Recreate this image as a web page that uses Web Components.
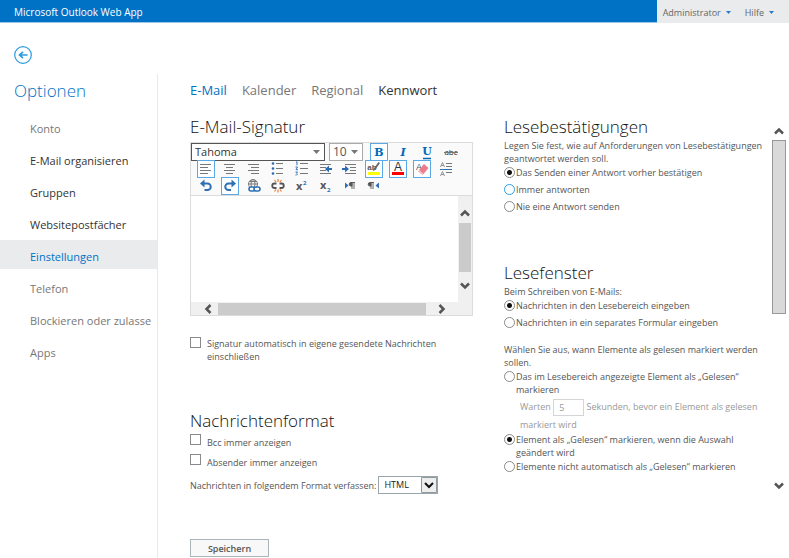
<!DOCTYPE html>
<html lang="de">
<head>
<meta charset="utf-8">
<title>Microsoft Outlook Web App</title>
<style>
body { margin: 0; font: 9px/13px "Open Sans", "Noto Sans", sans-serif; color: #555; background: #fff; }
</style>
</head>
<body>
<owa-app></owa-app>
<script>
const define = (name, html, setup) => {
  const template = document.createElement('template');
  template.innerHTML = html;
  customElements.define(name, class extends HTMLElement {
    constructor() {
      super();
      this.attachShadow({ mode: 'open' }).append(template.content.cloneNode(true));
    }
    connectedCallback() { if (setup) setup(this, this.shadowRoot); }
  });
};

/* Blue title bar with the account menu */
define('owa-topbar', `
<style>
  :host { display: flex; height: 23px; font-size: 10px; }
  .brand { flex: 1; height: 23px; background: #0072c6; color: #fff; padding-left: 14px; line-height: 24px; white-space: nowrap; border-bottom: 1px solid #9fc6e6; box-sizing: border-box; }
  nav { display: flex; gap: 14px; background: #e9ebed; padding: 0 15px 0 6px; }
  button { all: unset; display: flex; align-items: center; gap: 5px; color: #666; font-size: 9px; padding-top: 2px; }
  svg { display: block; }
</style>
<div class="brand">Microsoft Outlook Web App</div>
<nav>
  <button>Administrator <svg width="5" height="3"><path d="M0 0h5L2.5 3z" fill="#2a7ac6"/></svg></button>
  <button>Hilfe <svg width="5" height="3"><path d="M0 0h5L2.5 3z" fill="#2a7ac6"/></svg></button>
</nav>`);

define('owa-nav-item', `
<style>
  :host { display: block; }
  a { display: block; height: 29px; padding: 0 0 0 30px; font-size: 11px; line-height: 34px; color: #777; text-decoration: none; white-space: nowrap; overflow: hidden; }
  :host([strong]) a { color: #333; }
  :host([active]) a { color: #0072c6; background: #e9ebed; }
</style>
<a href="#"><slot></slot></a>`, (host, root) => {
  if (host.hasAttribute('active')) root.querySelector('a').setAttribute('aria-current', 'page');
});

define('owa-sidebar', `
<style>
  :host { display: flex; flex-direction: column; gap: 3px; border-right: 1px solid #e9e9ec; box-sizing: border-box; }
  h1 { margin: 0 0 1px; padding-left: 14px; font-size: 17px; line-height: 34px; font-weight: 300; color: #0072c6; }
</style>
<h1>Optionen</h1>
<slot></slot>`);

define('owa-tabs', `
<style>
  :host { display: flex; gap: 15px; font-size: 13px; line-height: 18px; }
  a { color: #777; text-decoration: none; }
  .on { color: #0072c6; }
  .dark { color: #333; }
</style>
<a href="#" class="on" aria-current="page">E-Mail</a><a href="#">Kalender</a><a href="#">Regional</a><a href="#" class="dark">Kennwort</a>`);

define('owa-section', `
<style>
  :host { display: block; }
  h2 { margin: 0 0 var(--heading-gap, 0); font-size: 17px; line-height: 24px; font-weight: 300; color: #111; }
</style>
<h2></h2><slot></slot>`, (host, root) => { root.querySelector('h2').textContent = host.getAttribute('heading'); });

/* Tick box or radio with its label */
define('owa-choice', `
<style>
  :host { display: block; }
  label { display: flex; align-items: flex-start; }
  input { appearance: none; flex: none; box-sizing: border-box; width: 11px; height: 11px; margin: 0; border: 1px solid #8a8a8a; background: #fff; }
  input[type=radio] { border-radius: 50%; margin: 1px 1px 0 0; }
  input[type=radio]:checked { background: radial-gradient(circle, #111 0 2px, #fff 3px); }
  input[type=checkbox] { margin-right: 6px; }
  :host([hot]) input { border-color: #2a9fe0; }
  :host([kind=checkbox]) span { padding-top: var(--drop, 0); }
</style>
<label><input><span><slot></slot></span></label>`, (host, root) => {
  const input = root.querySelector('input');
  input.type = host.getAttribute('kind') || 'radio';
  input.name = host.getAttribute('group') || '';
  input.checked = host.hasAttribute('checked');
});

/* Toolbar button: its glyph is looked up by name */
const G = '#777', B = '#2b6cb0';
const lines = (x, ws, ys, c = G) => ws.map((w, i) => `<path d="M${x[i]} ${ys[i]}.5h${w}" stroke="${c}"/>`).join('');
const serif = 'text-anchor="middle" font-family="DejaVu Serif" font-weight="700" font-size="11" fill="#0068b8"';
const glyphs = {
  bold: `<text x="9" y="13" ${serif}>B</text>`,
  italic: `<text x="9" y="13" font-style="italic" ${serif}>I</text>`,
  underline: `<text x="9" y="12" ${serif}>U</text><path d="M5 15.500h8" stroke="#0068b8" stroke-width="1.500"/>`,
  strike: '<text x="9" y="12" text-anchor="middle" font-family="Open Sans" font-size="8" fill="#222">abc</text><path d="M2 9.500h14" stroke="#777"/>',
  left: lines([3,3,3,3], [11,8,11,8], [4,7,10,13]),
  center: lines([3,5,3,5], [11,7,11,7], [4,7,10,13]),
  right: lines([3,6,3,6], [11,8,11,8], [4,7,10,13]),
  bullets: lines([7,7,7], [7,7,7], [3,8,13]) + `<g fill="${B}"><circle cx="4" cy="3.500" r="1.300"/><circle cx="4" cy="8.500" r="1.300"/><circle cx="4" cy="13.500" r="1.300"/></g>`,
  numbers: lines([7,7,7], [8,8,8], [3,8,13]) + `<path d="M3 2.500l1-.8v3.600M2.500 7h2L3 9.700h2M2.500 12h2l-1 1.300 1 .8-1 1h-1" fill="none" stroke="${B}" stroke-width=".9"/>`,
  outdent: lines([3,3,3,3], [11,6,6,11], [4,7,10,13]) + `<path d="M8 9l4-3.500v2.500h3v2h-3v2.500z" fill="${B}"/>`,
  indent: lines([4,9,9,4], [11,6,6,11], [4,7,10,13]) + `<path d="M8 9L4 5.500v2.500H1v2h3v2.500z" fill="${B}"/>`,
  highlight: '<text x="7" y="10" text-anchor="middle" font-family="Liberation Sans" font-weight="700" font-size="8" fill="#555">ab</text><path d="M15 3l-5 7-2 1 .5-2 5-7z" fill="#666"/><path d="M3 12h12v3H3z" fill="#ff0"/>',
  color: '<text x="9" y="11" text-anchor="middle" font-family="Liberation Sans" font-size="12" fill="#333">A</text><path d="M3 12h12v3H3z" fill="#f00"/>',
  eraser: '<text x="6" y="10" text-anchor="middle" font-family="Liberation Sans" font-size="9" fill="#555">A</text><path d="M11 4l4.500 4-5 6L6 10z" fill="#ea7d8c"/><path d="M6 10l4.500 4-1.200 1L5 11.500z" fill="#f4b4bc"/>',
  spacing: lines([9,9,3,9], [6,6,12,6], [3,6,9,12]) + '<path d="M3.500 7l2-4.500 2 4.500M4.300 5.500h2.400M3.500 16l2-4.500 2 4.500M4.300 14.500h2.400" fill="none" stroke="#888" stroke-width=".9"/><path d="M3 9.500h12" stroke="#2f6fb3"/>',
  undo: '<path d="M5 6.500h5.500a3.200 3.200 0 0 1 0 6.500H7.500" fill="none" stroke="#2f6fb3" stroke-width="2"/><path d="M7.500 2.500v8L3 6.500z" fill="#2f6fb3"/>',
  redo: '<path d="M13 6.500H7.500a3.200 3.200 0 0 0 0 6.500H10" fill="none" stroke="#2f6fb3" stroke-width="2"/><path d="M10.500 2.500v8L15 6.500z" fill="#2f6fb3"/>',
  link: '<g fill="none" stroke="#777"><circle cx="8" cy="7" r="4.500"/><ellipse cx="8" cy="7" rx="2" ry="4.500"/><path d="M3.500 7h9M4.500 4.500h7"/></g><g fill="#fff" stroke="#2f6fb3" stroke-width="1.600"><rect x="4" y="10" width="6" height="4" rx="2"/><rect x="9" y="10" width="6" height="4" rx="2"/></g>',
  unlink: '<g fill="none" stroke="#555" stroke-width="1.800"><path d="M7.500 6.500H5.500a2.200 2.200 0 0 0 0 4.500h2M10.500 6.500h2a2.200 2.200 0 0 1 0 4.500h-2"/></g><path d="M9 2v3M5.500 3l1.500 2M12.500 3L11 5M9 12.500v3M5.500 14.500L7 12.500M12.500 14.500L11 12.500" stroke="#ee7d31" stroke-width="1.200"/>',
  sup: '<text x="3" y="13" font-family="Open Sans" font-weight="700" font-size="11" fill="#555">x</text><text x="10" y="8" font-family="Open Sans" font-weight="700" font-size="6" fill="#2f6fb3">2</text>',
  sub: '<text x="3" y="12" font-family="Open Sans" font-weight="700" font-size="11" fill="#555">x</text><text x="10" y="15" font-family="Open Sans" font-weight="700" font-size="6" fill="#2f6fb3">2</text>',
  ltr: '<path d="M4 5.500v6L7.500 8.500z" fill="#2f6fb3"/><path d="M11 5.500h-1a1.800 1.800 0 0 0 0 3.600h1zM11 5v7M13 5v7M10 5.500h4" fill="#555" stroke="#555" stroke-width=".9"/>',
  rtl: '<path d="M14 5.500v6L10.500 8.500z" fill="#2f6fb3"/><path d="M6 5.500H5a1.800 1.800 0 0 0 0 3.600h1zM6 5v7M8 5v7M5 5.500h4" fill="#555" stroke="#555" stroke-width=".9"/>'
};
define('owa-tool', `
<style>
  :host { display: grid; flex: none; width: 24px; height: 17px; place-items: center; }
  button { all: unset; box-sizing: border-box; width: 18px; height: 18px; }
  :host([on]) button { box-shadow: inset 0 0 0 1px #5aa9e6; background: #fdfeff; }
  svg { display: block; overflow: visible; }
</style>
<button><svg width="18" height="18" viewBox="0 0 18 18"></svg></button>`, (host, root) => {
  root.querySelector('svg').innerHTML = glyphs[host.getAttribute('icon')];
  root.querySelector('button').setAttribute('aria-label', host.getAttribute('icon'));
});

define('owa-select', `
<style>
  :host { display: grid; flex: none; grid-template-columns: minmax(0, 1fr) auto; box-sizing: border-box; height: 18px; border: 1px solid #aaa; background: #fff; align-items: center; }
  select { appearance: none; grid-area: 1 / 1 / 2 / 3; width: 100%; height: 100%; border: 0; margin: 0; padding: 0 0 0 3px; background: none; font: 12px/16px "Open Sans", sans-serif; color: #555; outline: 0; }
  svg { grid-area: 1 / 2; margin-right: 4px; pointer-events: none; }
  .box { display: none; }
  :host([dark]) { border-color: #555; }
  :host([dark]) select { color: #333; font-size: 11px; }
  :host([classic]) { border-color: #9aa5ab; }
  :host([classic]) select { font-size: 9px; color: #222; padding-left: 5px; }
  :host([classic]) .tri { display: none; }
  :host([classic]) .box { display: block; margin: 0; }
</style>
<select></select>
<svg class="tri" width="7" height="4"><path d="M0 0h7L3.500 4z" fill="#777"/></svg>
<svg class="box" width="16" height="16"><path d="M.5.5h15v15H.5z" fill="#eee" stroke="#909a9f"/><path d="M4 6l4 4 4-4" fill="none" stroke="#111" stroke-width="2"/></svg>`, (host, root) => {
  const s = root.querySelector('select');
  s.add(new Option(host.getAttribute('value')));
  s.setAttribute('aria-label', host.getAttribute('label'));
});

const arrow = d => `<svg width="12" height="12" viewBox="0 0 12 12"><path d="${d}" fill="none" stroke="#555" stroke-width="2.500"/></svg>`;
const up = arrow('M2 8.500l4-4 4 4'), down = arrow('M2 3.500l4 4 4-4'), prev = arrow('M8.500 2l-4 4 4 4'), next = arrow('M3.500 2l4 4-4 4');

/* Signature editor: toolbar, text area and its two scroll bars */
define('owa-editor', `
<style>
  :host { display: block; border: 1px solid #dcdcdc; background: #fafafa; }
  .tools { height: 53px; border-bottom: 1px solid #dcdcdc; box-sizing: border-box; }
  .row { display: flex; height: 17px; padding-left: 3px; }
  .row.first { padding: 0; }
  .font { width: 134px; margin-right: 4px; }
  .size { width: 34px; margin-right: 4px; }
  .body { display: grid; grid-template: 106px 13px / minmax(0, 1fr) 14px; background: #f0f0f0; }
  textarea { border: 0; padding: 4px; margin: 0; resize: none; outline: 0; background: #fff; font: 11px "Open Sans", sans-serif; overflow: hidden; }
  .v { display: grid; grid-template-rows: 27px 49px 27px; justify-items: center; align-items: center; }
  .v svg:first-child { align-self: end; margin-bottom: 4px; }
  i { background: #cbcbcb; }
  .v i { width: 12px; height: 100%; }
  .h { display: grid; grid-template-columns: 27px minmax(0, 1fr) 32px; align-items: center; justify-items: center; }
  .h svg:first-child { justify-self: end; margin-right: 4px; }
  .h i { height: 12px; width: 100%; }
</style>
<div class="tools">
  <div class="row first"><owa-select class="font" dark value="Tahoma" label="Schriftart"></owa-select><owa-select class="size" value="10" label="Schriftgrad"></owa-select><owa-tool icon="bold" on></owa-tool><owa-tool icon="italic"></owa-tool><owa-tool icon="underline"></owa-tool><owa-tool icon="strike"></owa-tool></div>
  <div class="row"><owa-tool icon="left" on></owa-tool><owa-tool icon="center"></owa-tool><owa-tool icon="right"></owa-tool><owa-tool icon="bullets"></owa-tool><owa-tool icon="numbers"></owa-tool><owa-tool icon="outdent"></owa-tool><owa-tool icon="indent"></owa-tool><owa-tool icon="highlight" on></owa-tool><owa-tool icon="color" on></owa-tool><owa-tool icon="eraser" on></owa-tool><owa-tool icon="spacing"></owa-tool></div>
  <div class="row"><owa-tool icon="undo"></owa-tool><owa-tool icon="redo" on></owa-tool><owa-tool icon="link"></owa-tool><owa-tool icon="unlink"></owa-tool><owa-tool icon="sup"></owa-tool><owa-tool icon="sub"></owa-tool><owa-tool icon="ltr"></owa-tool><owa-tool icon="rtl"></owa-tool></div>
</div>
<div class="body">
  <textarea aria-label="E-Mail-Signatur"></textarea>
  <div class="v">${up}<i></i>${down}</div>
  <div class="h">${prev}<i></i>${next}</div>
</div>`);

define('owa-scrollbar', `
<style>
  :host { display: flex; flex-direction: column; align-items: center; width: 14px; }
  i { flex: 0 0 174px; box-sizing: border-box; width: 14px; border: 1px solid #999; background: #d9d9d9; margin: 3px 0 166px; }
</style>
${up}<i></i>${down}`);

define('owa-app', `
<style>
  :host { display: grid; grid-template: auto auto 1fr / 158px minmax(0, 1fr); min-height: 100vh; }
  owa-topbar { grid-column: 1 / 3; }
  .back { all: unset; grid-column: 1 / 3; width: 18px; height: 18px; margin: 23px 0 10px 14px; }
  .back svg { display: block; }
  main { display: grid; grid-template: auto 1fr / minmax(0, 1fr) 14px; gap: 16px 3px; padding: 7px 3px 0 32px; }
  owa-tabs { grid-column: 1 / 3; }
  .cols { display: grid; grid-template-columns: minmax(0, 283fr) minmax(0, 265fr); column-gap: 31px; }
  .side { padding-top: 10px; }
  p { margin: 0 0 1px; }
  .signature { --heading-gap: 3px; }
  .sig { margin-top: 21px; }
  .fmt { margin-top: 46px; --drop: 2px; }
  .fmt owa-choice { margin: 1px 0 5px; }
  .pick { display: flex; align-items: center; gap: 2px; margin-top: 7px; }
  .pick owa-select { width: 60px; }
  .save { display: block; box-sizing: border-box; width: 79px; height: 18px; margin-top: 45px; padding: 0; border: 1px solid #a9b5b9; background: #f8f8f8; font: 600 9px/13px "Open Sans", sans-serif; color: #555; }
  .set { display: grid; gap: 4px; }
  .set.tight { gap: 1px; }
  .reading { margin-top: 48px; }
  .when { margin-top: 14px; }
  .wait { margin: 2px 0 0 16px; line-height: 17px; color: #999; }
  .wait input { box-sizing: border-box; width: 31px; height: 17px; margin: 0; padding: 0 5px; border: 1px solid #d5d5d5; background: #fff; font: 9px/13px "Open Sans", sans-serif; color: #999; vertical-align: middle; }
</style>
<owa-topbar></owa-topbar>
<button class="back" aria-label="Zurück"><svg width="18" height="18" viewBox="0 0 18 18" fill="none" stroke="#2a9be0"><circle cx="9" cy="9" r="8.300" stroke-width="1.200"/><path d="M5.500 9h8M9 5.800L5.500 9 9 12.200" stroke-width="1.700"/></svg></button>
<owa-sidebar>
  <owa-nav-item>Konto</owa-nav-item>
  <owa-nav-item strong>E-Mail organisieren</owa-nav-item>
  <owa-nav-item strong>Gruppen</owa-nav-item>
  <owa-nav-item strong>Websitepostfächer</owa-nav-item>
  <owa-nav-item active>Einstellungen</owa-nav-item>
  <owa-nav-item>Telefon</owa-nav-item>
  <owa-nav-item>Blockieren oder zulasse</owa-nav-item>
  <owa-nav-item>Apps</owa-nav-item>
</owa-sidebar>
<main>
  <owa-tabs></owa-tabs>
  <div class="cols">
    <div>
      <owa-section class="signature" heading="E-Mail-Signatur"><owa-editor></owa-editor></owa-section>
      <owa-choice class="sig" kind="checkbox">Signatur automatisch in eigene gesendete Nachrichten einschließen</owa-choice>
      <owa-section class="fmt" heading="Nachrichtenformat">
        <owa-choice kind="checkbox">Bcc immer anzeigen</owa-choice>
        <owa-choice kind="checkbox">Absender immer anzeigen</owa-choice>
        <div class="pick"><span>Nachrichten in folgendem Format verfassen:</span><owa-select classic value="HTML" label="Nachrichten in folgendem Format verfassen"></owa-select></div>
      </owa-section>
      <button class="save">Speichern</button>
    </div>
    <div>
      <owa-section heading="Lesebestätigungen">
        <p>Legen Sie fest, wie auf Anforderungen von Lesebestätigungen geantwortet werden soll.</p>
        <div class="set">
          <owa-choice group="receipt" checked>Das Senden einer Antwort vorher bestätigen</owa-choice>
          <owa-choice group="receipt" hot>Immer antworten</owa-choice>
          <owa-choice group="receipt">Nie eine Antwort senden</owa-choice>
        </div>
      </owa-section>
      <owa-section class="reading" heading="Lesefenster">
        <p>Beim Schreiben von E-Mails:</p>
        <div class="set">
          <owa-choice group="compose" checked>Nachrichten in den Lesebereich eingeben</owa-choice>
          <owa-choice group="compose">Nachrichten in ein separates Formular eingeben</owa-choice>
        </div>
        <p class="when">Wählen Sie aus, wann Elemente als gelesen markiert werden sollen.</p>
        <owa-choice group="read">Das im Lesebereich angezeigte Element als „Gelesen“ markieren</owa-choice>
        <p class="wait"><label for="secs">Warten</label> <input id="secs" value="5" disabled> Sekunden, bevor ein Element als gelesen markiert wird</p>
        <div class="set tight">
          <owa-choice group="read" checked>Element als „Gelesen“ markieren, wenn die Auswahl geändert wird</owa-choice>
          <owa-choice group="read">Elemente nicht automatisch als „Gelesen“ markieren</owa-choice>
        </div>
      </owa-section>
    </div>
  </div>
  <owa-scrollbar class="side"></owa-scrollbar>
</main>`);
</script>
</body>
</html>
